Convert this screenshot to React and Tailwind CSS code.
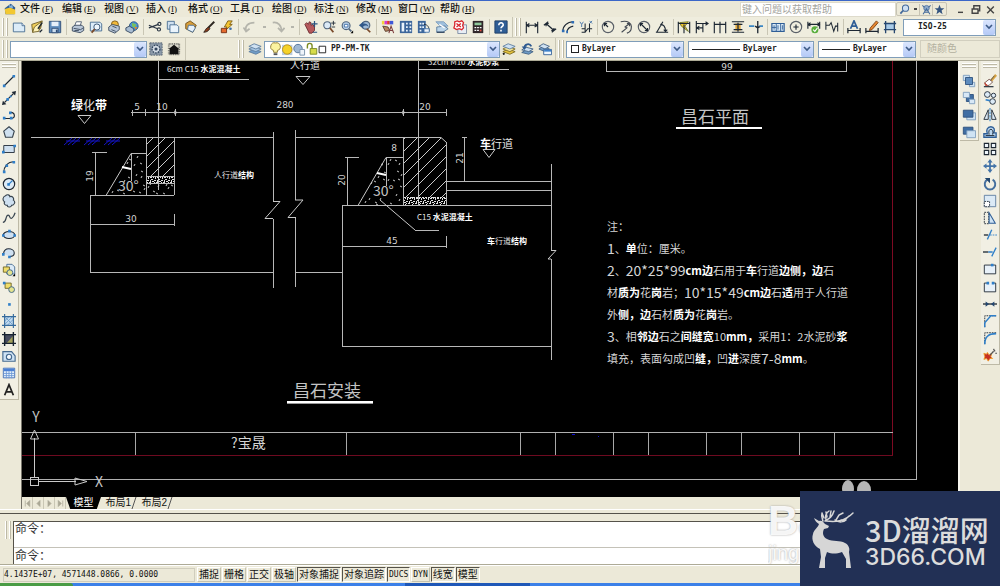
import React from "react";

const INK = "#1d2733";
const BLUE = "#3f6fa8";
const PALE = "#cfe0f0";

const glyphs = {
  new: (
    <g>
      <path d="M1.500 3.500h10l3 3v7h-13z" fill="#dcecf8" stroke="#44698f" />
      <path d="M11.500 3.500v3h3" fill="#fff" stroke="#44698f" />
    </g>
  ),
  open: (
    <g>
      <path d="M2 5l6-2 6-2-2 9-9 4z" fill="#f2d05b" stroke="#6b5a22" />
      <path d="M5 8l8-6-3 11-7 1z" fill="#fdf2b8" stroke="#6b5a22" />
      <path d="M9 10l5-7M11 14l3-3" stroke={INK} strokeWidth="1.500" />
    </g>
  ),
  save: (
    <g>
      <path d="M1.500 1.500h13v13h-13z" fill="#5f8dbd" stroke="#2b4a73" />
      <path d="M4 2h8v5H4z" fill="#e6f0fa" />
      <path d="M4.500 9.500h7v5h-7z" fill="#cddff0" stroke="#2b4a73" />
      <path d="M9 11h2v3H9z" fill="#2b4a73" />
    </g>
  ),
  print: (
    <g>
      <path d="M4 7l2-5h6l-2 6z" fill="#fff" stroke="#4d5c70" />
      <path d="M1.500 8l3-2h8l2 2v4l-4 2.500-9-2z" fill="#b9c7d8" stroke="#39485c" />
      <path d="M3 9.500l8 1.500 3-2M4 12h5" stroke="#39485c" fill="none" />
    </g>
  ),
  preview: (
    <g>
      <path d="M1.500 2.500h11l2 2v8h-13z" fill="#dcecf8" stroke="#44698f" />
      <circle cx="9" cy="8" r="3.500" fill="#eef6fc" stroke="#2d4a6c" />
      <path d="M6.500 10.500L3 14.500" stroke="#7a4a2a" strokeWidth="2" />
    </g>
  ),
  publish: (
    <g>
      <circle cx="9" cy="5" r="4" fill="#f1b93a" stroke="#7a5613" />
      <path d="M2 8l4-3 8 2v4l-5 4-7-3z" fill="#b9c7d8" stroke="#39485c" />
      <path d="M6 7l5 2M5 11l5 2" stroke="#39485c" />
    </g>
  ),
  globe: (
    <g>
      <circle cx="10" cy="7" r="5" fill="#4a93d6" stroke="#2b5480" />
      <path d="M8 3l5 2-2 4-3-2z" fill="#79c05c" />
      <path d="M11 8l3 0-2 3z" fill="#e9842c" />
      <path d="M1 9l4-2 5 3v3l-3 2-6-3z" fill="#a9bdd2" stroke="#33465e" />
    </g>
  ),
  cut: (
    <g fill="none" stroke="#2c3745" strokeWidth="1.300">
      <path d="M1 6l10 4M1 9l11-4" />
      <circle cx="13" cy="4.500" r="1.800" />
      <circle cx="12.500" cy="10.800" r="1.800" />
    </g>
  ),
  copy: (
    <g stroke="#44698f">
      <path d="M1.500 1.500h8v9h-8z" fill="#cfe0f0" />
      <path d="M4.500 5.500h8l2 2v7h-10z" fill="#eaf4fc" />
    </g>
  ),
  paste: (
    <g>
      <path d="M2 4l5-3 7 5-4 8-8-4z" fill="#d99f3a" stroke="#6b4a14" />
      <path d="M5 6h6l2 3-3 5-6-3z" fill="#e6f1fb" stroke="#44698f" />
    </g>
  ),
  brush: (
    <g>
      <path d="M14 2L7 9" stroke="#2c2620" strokeWidth="2.200" />
      <path d="M8 8l1 2c-2 3-4 4-7 4 2-2 2-5 6-6z" fill="#8a3d1d" stroke="#2c2620" />
    </g>
  ),
  editor: (
    <g>
      <path d="M9 1l-4 7h3l-2 4 8-7h-3l3-4z" fill="#f4c430" stroke="#7a5a10" />
      <path d="M1.500 9.500h6v5h-6z" fill="#e56a2e" stroke="#702a10" />
      <circle cx="12" cy="10" r="1.500" fill={BLUE} />
    </g>
  ),
  undo: <path d="M4 14C1 7 6 3 13 3M0.500 8.500L3.500 13l4-3" fill="none" stroke="#b5b5ac" strokeWidth="2" />,
  redo: <path d="M2 3c6-1 10 3 10 10M8 9l4 4 3.500-4" fill="none" stroke="#b5b5ac" strokeWidth="2" />,
  pan: (
    <g>
      <path d="M1 5l2-2 2 2 1-3 2 1v3l2-1 2 3v4l-3 3H6z" fill="#b5595c" stroke="#6a2c30" />
      <path d="M12 1v7M8.500 4.500h7M10 14h5" stroke="#2b5480" strokeWidth="1.400" />
    </g>
  ),
  zoomRt: (
    <g>
      <circle cx="6" cy="6" r="4" fill="#dbe9f6" stroke="#50657e" strokeWidth="1.300" />
      <path d="M9 9l4 5" stroke="#7a4a2a" strokeWidth="2" />
      <path d="M13 1v5M10.500 3.500h5M11 8h4" stroke={INK} />
    </g>
  ),
  zoomWin: (
    <g>
      <circle cx="7" cy="6.500" r="4.500" fill="#b9d0e8" stroke="#50657e" strokeWidth="1.300" />
      <path d="M5 5h4v3H5z" fill="#fff" stroke={BLUE} />
      <path d="M10 10l3 3" stroke="#50657e" strokeWidth="2" />
      <path d="M15 12v3h-3z" fill="#000" />
    </g>
  ),
  zoomPrev: (
    <g>
      <circle cx="9" cy="6" r="4.500" fill="#9fbbd8" stroke="#50657e" strokeWidth="1.300" />
      <path d="M1 6l5-4v2c4 0 5 1 6 4-2-2-4-2-6-1v3z" fill="#31598a" />
      <path d="M10 10l4 4" stroke="#7a4a2a" strokeWidth="2" />
    </g>
  ),
  props: (
    <g>
      <path d="M1 1h3v4H1z" fill="#f3d43a" />
      <path d="M4 1h3v4H4z" fill="#d33ad0" />
      <path d="M7 1h3v4H7z" fill="#e0332e" />
      <path d="M10 1h4v4h-4z" fill="#3e57d8" />
      <path d="M2 7l6 1 2 4-5 1z" fill="#b98660" stroke="#54382a" />
      <path d="M9 15l2.500-8 3 8M10 12h4" fill="none" stroke="#7b3b3b" strokeWidth="1.200" />
    </g>
  ),
  dcenter: (
    <g>
      <path d="M1 1h14v14H1z" fill="#3c669b" />
      <path d="M3 3h3v10H3zM8 3h2v2H8zM12 3h2v2h-2zM8 7h2v2H8zM12 7h2v2h-2zM8 11h2v2H8zM12 11h2v2h-2z" fill="#e9f3fc" />
    </g>
  ),
  palettes: (
    <g>
      <path d="M1 1h9v14H1z" fill="#3c669b" />
      <path d="M3 3h2v2H3zM6 3h2v2H6zM3 7h2v2H3zM6 7h2v2H6zM3 11h2v2H3z" fill="#e9f3fc" />
      <path d="M8 5c4 0 6 3 6 8" fill="none" stroke={INK} />
      <path d="M8 10h6v4H8z" fill="#f0f5fa" stroke={BLUE} />
    </g>
  ),
  sheetset: (
    <g>
      <path d="M1 2h9l5 5H6z" fill="#9fc0dd" stroke="#7c9dbb" />
      <path d="M2 8l9-1 4 3-6 4-7 0z" fill="#bcd6ea" stroke="#56799c" />
      <path d="M2 14h9" stroke="#33465e" strokeWidth="1.500" />
      <path d="M5 5l6 4" stroke="#fff" strokeWidth="1.400" />
    </g>
  ),
  markup: (
    <g>
      <path d="M5.500 5.500h10v10h-10z" fill="#e8eef5" stroke="#7788a0" />
      <path d="M2 2l3-1 2 1 3-1 2 2-1 3 1 3-2 2-3-1-3 1-3-2 1-3z" fill="#fff" stroke="#d8262c" strokeWidth="1.500" />
      <path d="M4 4l5 4M9 4L4 8" stroke="#d8262c" strokeWidth="1.500" />
    </g>
  ),
  calc: (
    <g>
      <path d="M2 1h12v14H2z" fill="#31282b" />
      <path d="M4 3h8v3H4z" fill="#8fc79b" />
      <path d="M4 8h2v1.500H4zM7 8h2v1.500H7zM10 8h2v1.500h-2zM4 11h2v1.500H4zM7 11h2v1.500H7z" fill="#fff" />
      <path d="M10 11h2v2h-2z" fill="#df4b3c" />
    </g>
  ),
  help: (
    <g>
      <path d="M1 1h14v14H1z" fill="#2f5e96" stroke="#1b3b63" />
      <path d="M5.500 6c0-4 5.500-3.500 5 0-.3 1.500-2.500 1.500-2.500 3.500M8 11v2" fill="none" stroke="#fff" strokeWidth="1.800" />
    </g>
  ),
  dimLinear: <path d="M1.500 2v13M14.500 2v13M2 6h12M5 4L2 6l3 2M11 4l3 2-3 2" fill="none" stroke={INK} strokeWidth="1.300" />,
  dimAligned: <path d="M1 6l5-4M10 14l5-4M3.500 4l9 8M3.500 4v3M3.500 4h3M12.500 12v-3M12.500 12h-3" fill="none" stroke={INK} strokeWidth="1.400" />,
  dimArc: (
    <g>
      <path d="M2 13C2 7 7 2 14 2M7 14c0-4 2-6 7-7" fill="none" stroke={INK} strokeWidth="1.300" />
      <path d="M1 11h3v3H1zM12 1h3v3h-3zM6 12h2v3H6z" fill="#2f6db5" />
    </g>
  ),
  dimOrd: (
    <g>
      <path d="M3 14h4l3-4h5M7 4v10M12 4v10M3 10h4" fill="none" stroke={INK} strokeWidth="1.200" />
      <path d="M1 2l2 3 2-3M3 5v3M12 1l3 3M15 1l-3 3" fill="none" stroke={BLUE} />
    </g>
  ),
  dimRadius: (
    <g fill="none" stroke="#5a6068" strokeWidth="1.300">
      <circle cx="8" cy="8" r="6.500" />
      <path d="M8 8L4 4M4 7V4h3" stroke={INK} />
    </g>
  ),
  dimJog: <path d="M2 2c8-2 13 2 12 7 0 3-2 5-5 6M3 14l6-5-2-1 5-4M9 4h3v3" fill="none" stroke="#454b54" strokeWidth="1.300" />,
  dimDia: (
    <g fill="none" stroke="#5a6068" strokeWidth="1.300">
      <circle cx="8" cy="8" r="6.500" />
      <path d="M4 4l8 8M4 7V4h3M12 9v3H9" stroke={INK} />
    </g>
  ),
  dimAng: <path d="M1 14h14M2 14L9 2M6 5c4 0 6 3 6 8M10 11l2 2 2-2" fill="none" stroke={INK} strokeWidth="1.300" />,
  dimQuick: (
    <g>
      <path d="M3 3l10-1-4 5 4 6-8-6z" fill="#f2c62f" stroke="#66712a" />
      <path d="M1.500 2v13M8 5v10M14.500 2v13M2 4h12" fill="none" stroke={INK} strokeWidth="1.300" />
    </g>
  ),
  dimBase: <path d="M1.500 1v14M15 4H2M9 4v5H2M9 9v5M5 7L2 9l3 2M12 2l3 2-3 2" fill="none" stroke={INK} strokeWidth="1.300" />,
  dimCont: <path d="M1.500 2v13M8 2v13M14.500 2v13M2 5h12" fill="none" stroke={INK} strokeWidth="1.300" />,
  dimSpace: (
    <g>
      <path d="M5 4h6v8H5z" fill="#e1a83c" />
      <path d="M1 2h14M1 14h14M8 3v10M3 5h10M3 11h10" fill="none" stroke={INK} strokeWidth="1.400" />
    </g>
  ),
  dimBreak: (
    <g>
      <path d="M10 1v14M7 7l3 2 3-2" fill="none" stroke={INK} strokeWidth="1.500" />
      <path d="M0 7h6M12 7h4" stroke="#3b86c4" strokeWidth="2" />
    </g>
  ),
  tolerance: (
    <g>
      <path d="M1 4h14v9H1z" fill="#dcecf8" stroke="#2f5e96" strokeWidth="1.400" />
      <path d="M6 4v9M11 4v9M3.500 6v5M1 8.500h5M13 6v5M8 6v5" stroke="#2f5e96" />
    </g>
  ),
  center: (
    <g fill="none" stroke="#5a6068" strokeWidth="1.300">
      <circle cx="8" cy="8" r="6.500" />
      <path d="M8 5v6M5 8h6" stroke={INK} />
    </g>
  ),
  inspect: (
    <g>
      <path d="M1 2v8M14.500 2v8M1 5h14M4 3L1.500 5 4 7M12 3l2.500 2L12 7" fill="none" stroke={INK} strokeWidth="1.300" />
      <circle cx="9" cy="11" r="4" fill="#58ae3c" />
      <path d="M7 11l2 2 3-4" fill="none" stroke="#fff" strokeWidth="1.200" />
    </g>
  ),
  jogLine: <path d="M1 2v9M1 6h4l2-3 3 10 2-6h3M14.500 3v10" fill="none" stroke={INK} strokeWidth="1.200" />,
  dimEdit: (
    <g>
      <path d="M4 10l4-9 4 9M5.500 7h5" fill="none" stroke="#2f5e96" strokeWidth="2" />
      <path d="M1 9v6M15 9v6M1 12h14" stroke={INK} strokeWidth="1.400" />
    </g>
  ),
  dimTedit: (
    <g>
      <path d="M13 1l2 2-7 8-3 1 1-3z" fill="#e4862f" stroke="#7c3f12" />
      <path d="M1 9v6M15 9v6M1 13h14" stroke={INK} strokeWidth="1.400" />
    </g>
  ),
  dimUpdate: (
    <g>
      <path d="M3 4h10v7H3z" fill="#a9cbe8" />
      <path d="M3 1v14M13 1v14M1 4h14M1 11h14" stroke="#27476f" strokeWidth="1.500" />
    </g>
  ),
  gear: (
    <g>
      <path d="M1 1h14v14H1z" fill="#8c9aa9" stroke="#4a5969" strokeDasharray="2 1" />
      <circle cx="8" cy="8" r="4.500" fill="#d5dde6" stroke="#33465e" strokeWidth="1.500" strokeDasharray="2 1" />
      <circle cx="8" cy="8" r="1.800" fill="#33465e" />
    </g>
  ),
  home: (
    <g>
      <path d="M2 2h12v12H2z" fill="#d9d7ca" stroke="#6b6b66" strokeDasharray="1 1" strokeWidth="2" />
      <path d="M8 3l6 5h-1v6H3V8H2z" fill="#111" />
    </g>
  ),
  layers: (
    <g stroke="#5c7d9f">
      <path d="M1 11l6-3 8 3-6 3z" fill="#6f9cc7" />
      <path d="M1 8l6-3 8 3-6 3z" fill="#a9c8e4" />
      <path d="M1 5l6-3 8 3-6 3z" fill="#cfe1f1" />
    </g>
  ),
  layersCur: (
    <g>
      <path d="M1 11l6-3 8 3-6 3z" fill="#e8c53e" stroke="#7a6820" />
      <path d="M1 8l6-3 8 3-6 3z" fill="#f4e7a0" stroke="#7a6820" />
      <path d="M1 5l6-3 8 3-6 3z" fill="#cfe1f1" stroke="#5c7d9f" />
      <path d="M3 13l-2 1" stroke="#111" strokeWidth="2" />
    </g>
  ),
  layersPrev: (
    <g>
      <path d="M2 12l5-3 8 2-5 3z" fill="#6f9cc7" stroke="#3f5f82" />
      <path d="M2 9l5-3 8 2-5 3z" fill="#cfe1f1" stroke="#3f5f82" />
      <path d="M5 7c0-5 6-6 8-2" fill="none" stroke="#2d5990" strokeWidth="2" />
      <path d="M2 5l3 4 3-4z" fill="#2d5990" />
    </g>
  ),
  layersState: (
    <g>
      <path d="M1 8l5-3 7 3-5 3z" fill="#6f9cc7" stroke="#3f5f82" />
      <path d="M1 5l5-3 7 3-5 3z" fill="#cfe1f1" stroke="#3f5f82" />
      <path d="M6.500 8.500h9v6h-9z" fill="#eef6fd" stroke="#2f5e96" />
      <path d="M7 9h8v2H7z" fill="#3c7fc9" />
    </g>
  ),
  line: (
    <g>
      <path d="M2 14L14 2" stroke={INK} strokeWidth="1.300" />
      <path d="M1 12h3v3H1zM12 1h3v3h-3z" fill="#2f7fc9" />
    </g>
  ),
  xline: (
    <g>
      <path d="M3 13L13 3" stroke={INK} strokeWidth="1.500" />
      <path d="M0 16l1-5 4 4zM16 0l-1 5-4-4z" fill={INK} />
      <path d="M5 8h3v3H5zM9 5h2v2H9z" fill="#2f7fc9" />
    </g>
  ),
  pline: (
    <g>
      <path d="M2 12h8c6 0 5-7 0-7" stroke={INK} strokeWidth="1.300" fill="none" />
      <path d="M1 10h3v3H1zM8 4h3v3H8zM9 10h3v3H9z" fill="#2f7fc9" />
    </g>
  ),
  polygon: <path d="M8 2l6 5-2 7H4L2 7z" fill={PALE} stroke="#38444f" strokeWidth="1.300" />,
  rect: (
    <g>
      <path d="M2 4h12v8H2z" fill={PALE} stroke={INK} />
      <path d="M0 10h3v3H0zM13 3h3v3h-3z" fill="#2f7fc9" />
    </g>
  ),
  arc: (
    <g>
      <path d="M2 14C2 8 6 2 14 2" stroke={INK} strokeWidth="1.300" fill="none" />
      <path d="M1 12h3v3H1zM4 5h3v3H4zM12 1h3v3h-3z" fill="#2f7fc9" />
    </g>
  ),
  circle: (
    <g>
      <circle cx="8" cy="8" r="6.500" fill="#dceaf6" stroke={INK} strokeWidth="1.300" />
      <path d="M8 8l4-4" stroke="#2f7fc9" strokeWidth="1.300" />
      <path d="M6 7h3v3H6z" fill="#2f7fc9" />
    </g>
  ),
  cloud: <path d="M4 2c2-2 5-1 5 1 3-1 5 2 4 4 3 2 1 6-2 6-1 3-5 2-5 0-3 0-4-2-3-4-3-2-2-6 1-7z" fill={PALE} stroke="#38444f" strokeWidth="1.300" />,
  spline: <path d="M1 13c3 0 3-3 4-6s3-3 4 0 4 1 6-5" fill="none" stroke="#38444f" strokeWidth="1.400" />,
  ellipse: (
    <g>
      <ellipse cx="8" cy="8" rx="6.500" ry="4" fill={PALE} stroke={INK} strokeWidth="1.200" />
      <path d="M0 7h3v3H0zM13 7h3v3h-3zM7 2h3v3H7z" fill="#2f7fc9" />
    </g>
  ),
  earc: (
    <g>
      <path d="M2 9c-1-8 12-7 12-1 0 3-3 4-5 4" fill={PALE} stroke={INK} strokeWidth="1.200" />
      <path d="M0 8h3v3H0zM7 11h3v3H7z" fill="#2f7fc9" />
    </g>
  ),
  insert: (
    <g>
      <path d="M5.500 1.500h6l3 3v8h-9z" fill="#dceaf6" stroke="#44698f" />
      <path d="M1.500 4.500h7v6h-7z" fill="#f0dd6a" stroke="#6d6526" />
      <circle cx="9" cy="11" r="3.300" fill="#e4e48e" stroke="#375f8a" />
      <path d="M15 12v3h-3z" fill="#000" />
    </g>
  ),
  block: (
    <g>
      <path d="M3.500 3.500h7v6h-7z" fill="#f0dd6a" stroke="#6d6526" />
      <circle cx="11" cy="11" r="3.300" fill="#e4e48e" stroke="#375f8a" />
      <path d="M1 2h3v3H1z" fill="#2f7fc9" />
    </g>
  ),
  point: <path d="M7 7h3v3H7z" fill="#2f7fc9" />,
  hatch: (
    <g>
      <path d="M3 3h10v10H3z" fill="#c3dcf0" />
      <path d="M3 8l5-5M3 12l9-9M6 13l7-7M4 4l8 8" stroke="#6d9cc8" />
      <path d="M3 0v16M13 0v16M0 3h16M0 13h16" stroke="#356a9c" strokeWidth="1.300" />
    </g>
  ),
  gradient: (
    <g>
      <path d="M3 3h10v10H3z" fill="#474c60" />
      <path d="M5 13l8-9v9z" fill="#a3a15c" />
      <path d="M3 0v16M13 0v16M0 3h16M0 13h16" stroke="#17222f" strokeWidth="1.600" />
    </g>
  ),
  region: (
    <g>
      <path d="M1 3h10l4 5v6H1z" fill="#cfe3f4" stroke="#44698f" strokeWidth="1.300" />
      <circle cx="8" cy="9" r="3" fill="#f3f8fc" stroke="#44698f" strokeWidth="1.300" />
    </g>
  ),
  table: (
    <g>
      <path d="M1.500 2.500h13v11h-13z" fill="#e8f2fb" stroke="#3868b5" />
      <path d="M2 3h12v3H2z" fill="#4a80d4" />
      <path d="M5 6v8M8 6v8M11 6v8M2 8.500h12M2 11h12" stroke="#6b98d6" />
    </g>
  ),
  mtext: <path d="M3 14L8 2l5 12M5 10h6" fill="none" stroke="#222" strokeWidth="2" />,
  ordFront: (
    <g>
      <path d="M1.500 1.500h7v6h-7zM8.500 9.500h6v5h-6z" fill="#cfe3f4" stroke="#7d9dbd" />
      <path d="M4 4h8v8H4z" fill="#5d8bbd" stroke="#2b4f7c" />
    </g>
  ),
  ordBack: (
    <g>
      <path d="M5 4h8v8H5z" fill="#3f6da3" stroke="#2b4f7c" />
      <path d="M1.500 1.500h7v6h-7zM8.500 9.500h6v5h-6z" fill="#d8e8f6" stroke="#7d9dbd" />
    </g>
  ),
  ordAbove: (
    <g>
      <path d="M5.500 5.500h10v8h-10z" fill="#cfe3f4" stroke="#7d9dbd" />
      <path d="M1.500 2.500h11v8h-11z" fill="#3f6da3" stroke="#2b4f7c" />
    </g>
  ),
  ordUnder: (
    <g>
      <path d="M1.500 2.500h11v8h-11z" fill="#3f6da3" stroke="#2b4f7c" />
      <path d="M5.500 6.500h10v8h-10z" fill="#cfe3f4" stroke="#7d9dbd" />
    </g>
  ),
  erase: (
    <g>
      <path d="M15 1L9 8" stroke="#d9a441" strokeWidth="3" />
      <path d="M13 2l-5 6" stroke="#555" />
      <path d="M2 10l5-4 4 3-4 4H3z" fill="#fff" stroke="#6d4b45" />
      <path d="M2 10l3 3h-2z" fill="#e76a58" stroke="#c2493a" />
      <path d="M1 14.500h11" stroke={INK} strokeWidth="1.300" />
    </g>
  ),
  copyObj: (
    <g fill="#dceaf6" stroke={INK}>
      <circle cx="5" cy="4" r="3.300" />
      <circle cx="12" cy="5" r="2.500" />
      <circle cx="11" cy="12" r="3.200" />
      <path d="M3 10l5 1" stroke="#2f7fc9" strokeWidth="2" />
    </g>
  ),
  mirror: (
    <g>
      <path d="M6 2v11H1zM10 2v11h5z" fill="#dceaf6" stroke={INK} />
      <path d="M8 0v16" stroke="#2f7fc9" strokeDasharray="3 1" strokeWidth="1.200" />
    </g>
  ),
  offset: (
    <g>
      <path d="M1 14v-4h4c-2-4 0-8 4-8s5 4 3 7h3v5z" fill="#b9d5ee" stroke="#2f5e96" strokeWidth="1.500" />
      <path d="M3 12h10M7 11c-1-4 0-6 2-6s3 2 2 6" fill="none" stroke={INK} />
    </g>
  ),
  array: <path d="M1.500 1.500h5v5h-5zM9.500 1.500h5v5h-5zM1.500 9.500h5v5h-5zM9.500 9.500h5v5h-5z" fill="#eef5fb" stroke={INK} strokeWidth="1.300" />,
  move: <path d="M8 0l3 4H9v3h3V5l4 3-4 3V9H9v3h2l-3 4-3-4h2V9H4v2L0 8l4-3v2h3V4H5z" fill="#4373a8" />,
  rotate: (
    <g>
      <path d="M5 3a6 6 0 1 0 6 0" fill="none" stroke="#456f9e" strokeWidth="2.200" />
      <path d="M2 1h6v6z" fill="#24476f" />
    </g>
  ),
  scale: (
    <g>
      <path d="M1.500 1.500h13v13h-13z" fill="#dceaf6" stroke="#5a7c9f" />
      <path d="M1.500 8.500h6v6h-6z" fill="#fff" stroke={INK} strokeDasharray="2 1" />
    </g>
  ),
  stretch: (
    <g>
      <path d="M1.500 1.500h5v13h-5z" fill="none" stroke={INK} strokeDasharray="2 1" />
      <path d="M7 2l7 12H7z" fill="#cfe3f4" stroke="#2f5e96" strokeWidth="1.200" />
    </g>
  ),
  trim: (
    <g>
      <path d="M1 8h5" stroke={INK} strokeWidth="1.500" />
      <path d="M5 13l5-11" stroke="#2f7fc9" strokeWidth="1.500" />
      <path d="M8 8h8" stroke="#2f7fc9" strokeDasharray="2 1" />
    </g>
  ),
  extend: (
    <g>
      <path d="M0 8h6" stroke={INK} strokeWidth="1.500" />
      <path d="M6 8h5M10 13l5-10" stroke="#2f7fc9" strokeWidth="1.500" />
    </g>
  ),
  breakPt: (
    <g>
      <path d="M1.500 3.500h13v10h-13z" fill="#e8f1f9" stroke={INK} />
      <path d="M9 2h3v3H9z" fill="#2f7fc9" />
    </g>
  ),
  breakTwo: (
    <g>
      <path d="M5 3.500H1.500v10h13v-10H11" fill="#e8f1f9" stroke={INK} />
      <path d="M4 2h3v3H4zM10 2h3v3h-3z" fill="#2f7fc9" />
    </g>
  ),
  join: (
    <g>
      <path d="M0 8h16" stroke={INK} strokeWidth="1.500" />
      <path d="M3 5l4 3-4 3zM13 5L9 8l4 3z" fill="#24476f" />
    </g>
  ),
  chamfer: (
    <g fill="none">
      <path d="M2 15V2h13" stroke={INK} strokeDasharray="2 1" />
      <path d="M2 15v-5l7-8h6" stroke="#2f7fc9" strokeWidth="1.600" />
    </g>
  ),
  fillet: (
    <g fill="none">
      <path d="M2 15V2h13" stroke={INK} strokeDasharray="2 1" />
      <path d="M2 15c0-8 4-12 13-12" stroke="#2f7fc9" strokeWidth="1.800" />
    </g>
  ),
  explode: (
    <g>
      <path d="M1 6l3 1 1-2 2 3 3-2-1 4 2 2-3 0-2 3-2-3-3 1 1-3z" fill="#c62f22" stroke="#f0a02d" />
      <path d="M8 8l4-4M12 1l1 2M14 6h2M11 4l3-1" stroke="#555" strokeWidth="1.300" />
    </g>
  ),
  search: (
    <g>
      <circle cx="9.500" cy="6" r="4.500" fill="#cfe0f2" stroke="#42699b" strokeWidth="1.500" />
      <path d="M6 9.500L2 14" stroke="#42699b" strokeWidth="2.500" />
    </g>
  ),
  comm: (
    <g>
      <circle cx="8" cy="6" r="4" fill="#8eaacb" stroke="#42699b" />
      <path d="M3 15l5-8 5 8M5 12h6M2 2l3 3M14 2l-3 3" fill="none" stroke="#42699b" strokeWidth="1.500" />
    </g>
  ),
  star: <path d="M8 1l2 5h5l-4 3.500L12.500 15 8 11.500 3.500 15 5 9.500 1 6h5z" fill="#33547f" />,
};

function Glyph({ name, className = "size-[14px]" }) {
  return (
    <svg viewBox="0 0 16 16" className={`${className} shrink-0`} fill="none" aria-hidden="true">
      {glyphs[name]}
    </svg>
  );
}

function Tool({ name, label, className = "w-[18px] h-4" }) {
  return (
    <button type="button" title={label} aria-label={label} className={`flex shrink-0 items-center justify-center hover:bg-[#c8d6ea] ${className}`}>
      <Glyph name={name} />
    </button>
  );
}

function Separator({ className = "w-[5px]" }) {
  return (
    <span className={`flex h-4 shrink-0 justify-center ${className}`}>
      <span className="w-px bg-[#c9c6b4]" />
    </span>
  );
}

function Grip() {
  return (
    <span className="mx-[2px] flex h-[18px] w-[6px] shrink-0 justify-between">
      <span className="w-[2px] border-r border-[#bdb9a6] bg-white" />
      <span className="w-[2px] border-r border-[#bdb9a6] bg-white" />
    </span>
  );
}

function TopGrip() {
  return (
    <span className="mx-[2px] mb-1 flex h-[5px] shrink-0 flex-col justify-between">
      <span className="h-[2px] border-b border-[#bdb9a6] bg-white" />
      <span className="h-[2px] border-b border-[#bdb9a6] bg-white" />
    </span>
  );
}

function Combo({ label, value, className = "", padding = "pl-1", children }) {
  return (
    <div className={`relative flex h-[17px] items-center border border-[#7f9db9] bg-white ${className}`}>
      {children}
      <select aria-label={label} defaultValue={value} className={`h-full w-full appearance-none bg-transparent font-['DejaVu_Sans_Mono',monospace] text-[8px] font-bold text-[#222] outline-none ${padding}`}>
        <option>{value}</option>
      </select>
      <span className="pointer-events-none absolute top-0 right-0 bottom-0 flex w-3 items-center justify-center rounded-[2px] bg-gradient-to-b from-[#dbe6fd] to-[#b4c9f6]">
        <svg viewBox="0 0 8 6" className="h-[6px] w-2" aria-hidden="true">
          <path d="M1 1l3 3 3-3" fill="none" stroke="#3d5a86" strokeWidth="1.600" />
        </svg>
      </span>
    </div>
  );
}

const menus = [
  ["文件", "F"],
  ["编辑", "E"],
  ["视图", "V"],
  ["插入", "I"],
  ["格式", "O"],
  ["工具", "T"],
  ["绘图", "D"],
  ["标注", "N"],
  ["修改", "M"],
  ["窗口", "W"],
  ["帮助", "H"],
];

function MenuBar() {
  return (
    <header className="flex h-[17px] shrink-0 items-center border-t border-[#3c67c8] pl-1">
      <svg viewBox="0 0 16 16" className="mr-1 size-3" aria-hidden="true">
        <path d="M1 7L9 1l6 5-1 9H2z" fill="#2f5e96" />
        <path d="M1 8l7-2 7 3v6H2z" fill="#f2c832" />
        <path d="M7 2l2 2 2-2 1 5-5-1z" fill="#86b4dc" />
      </svg>
      <nav className="flex flex-1">
        {menus.map(([text, key]) => (
          <button key={key} type="button" className="flex w-[42px] shrink-0 items-center whitespace-nowrap text-[10px] leading-4 font-medium text-[#111]">
            {text}
            <span className="ml-[2px] font-['Liberation_Serif',serif] text-[9px]">
              (<u>{key}</u>)
            </span>
          </button>
        ))}
      </nav>
      <input aria-label="键入问题以获取帮助" placeholder="键入问题以获取帮助" className="h-[15px] w-[156px] border border-[#dedbcc] bg-white px-px text-[10px] outline-none placeholder:text-[#a5a5a0]" />
      <div className="mr-2 flex h-[14px] items-center divide-x divide-[#c6c3b4] rounded-[2px] border border-[#c6c3b4]">
        <button type="button" aria-label="搜索" className="flex w-[23px] items-center justify-center gap-1">
          <Glyph name="search" className="size-[11px]" />
          <span className="h-[2px] w-[3px] bg-[#444]" />
        </button>
        <button type="button" aria-label="通讯中心" className="flex w-[13px] justify-center">
          <Glyph name="comm" className="size-[11px]" />
        </button>
        <button type="button" aria-label="收藏夹" className="flex w-[13px] justify-center">
          <Glyph name="star" className="size-[11px]" />
        </button>
      </div>
      <div className="flex items-center gap-1 pr-1 text-[#444]">
        {[
          ["最小化", "M3 10h6"],
          ["还原", "M2 6h7v5H2zM4 5V2h7v6H9"],
          ["关闭", "M2 3l8 8M10 3l-8 8"],
        ].map(([label, d]) => (
          <button key={label} type="button" aria-label={label}>
            <svg viewBox="0 0 12 12" className="h-[10px] w-[11px]" aria-hidden="true">
              <path d={d} fill="none" stroke="currentColor" strokeWidth="1.700" />
            </svg>
          </button>
        ))}
      </div>
    </header>
  );
}

const standardTools = [
  [["new", "新建"], ["open", "打开"], ["save", "保存"]],
  [["print", "打印"], ["preview", "打印预览"], ["publish", "发布"], ["globe", "三维发布"]],
  [["cut", "剪切"], ["copy", "复制"], ["paste", "粘贴"], ["brush", "特性匹配"], ["editor", "块编辑器"]],
];

const viewTools = [
  [["pan", "实时平移"], ["zoomRt", "实时缩放"], ["zoomWin", "窗口缩放"], ["zoomPrev", "缩放上一个"]],
  [["props", "特性"], ["dcenter", "设计中心"], ["palettes", "工具选项板"], ["sheetset", "图纸集"], ["markup", "标记集"], ["calc", "快速计算器"]],
  [["help", "帮助"]],
];

const dimTools = [
  [["dimLinear", "线性"], ["dimAligned", "对齐"], ["dimArc", "弧长"], ["dimOrd", "坐标"]],
  [["dimRadius", "半径"], ["dimJog", "折弯"], ["dimDia", "直径"], ["dimAng", "角度"]],
  [["dimQuick", "快速标注"], ["dimBase", "基线"], ["dimCont", "连续"], ["dimSpace", "标注间距"], ["dimBreak", "标注打断"]],
  [["tolerance", "公差"], ["center", "圆心标记"], ["inspect", "检验"], ["jogLine", "折弯线性"]],
  [["dimEdit", "编辑标注"], ["dimTedit", "编辑标注文字"], ["dimUpdate", "标注更新"]],
];

function ToolGroups({ groups, sep }) {
  return groups.map((group, i) => (
    <React.Fragment key={i}>
      {i > 0 && <Separator className={sep} />}
      {group.map(([name, label]) => (
        <Tool key={name} name={name} label={label} />
      ))}
    </React.Fragment>
  ));
}

function History({ name, label }) {
  return (
    <>
      <Tool name={name} label={label} />
      <button type="button" aria-label={`${label}列表`} className="flex w-[10px] justify-center">
        <span className="h-[2px] w-[3px] bg-[#b5b5ac]" />
      </button>
    </>
  );
}

function StandardRow() {
  return (
    <div className="flex h-[21px] shrink-0 items-center border-b border-[#d2cfbf] bg-[#efedde]">
      <Grip />
      <ToolGroups groups={standardTools} />
      <Separator />
      <History name="undo" label="放弃" />
      <History name="redo" label="重做" />
      <Separator />
      <ToolGroups groups={viewTools} />
      <span className="ml-[2px] h-full w-px bg-[#c9c6b4]" />
      <Grip />
      <ToolGroups groups={dimTools} sep="w-1" />
      <Combo label="标注样式" value="ISO-25" className="mx-1 min-w-[92px] flex-1" padding="pl-[14px]" />
    </div>
  );
}

function LayerMarks() {
  return (
    <svg viewBox="0 0 66 16" className="pointer-events-none absolute top-0 left-0 h-[15px] w-[66px]" aria-hidden="true">
      <path d="M9 1a4 4 0 0 1 2 8v2H7V9a4 4 0 0 1 2-8z" fill="#fbf3a0" stroke="#8d7b32" />
      <path d="M7 13h4" stroke="#555" strokeWidth="2" />
      <path d="M16 3h11v11H16z" fill="#b8cbe0" />
      <circle cx="21.500" cy="8" r="5" fill="#f5d229" stroke="#b9901b" />
      <circle cx="33" cy="7" r="4.500" fill="#9fb7d2" stroke="#54749a" />
      <path d="M35 8h5v6h-5z" fill="#eef4fa" stroke="#7c93ad" />
      <path d="M43 7V4a2.500 2.500 0 0 1 5 0v3" fill="none" stroke="#7d8c22" strokeWidth="1.500" />
      <path d="M46 7h7v6h-7z" fill="#d6dc4a" stroke="#7d8c22" />
      <path d="M55.500 4.500h7v7h-7z" fill="#fff" stroke="#222" />
    </svg>
  );
}

function LayerRow() {
  return (
    <div className="flex h-[23px] shrink-0 items-center border-b border-[#aeab97]">
      <Grip />
      <Combo label="工作空间" value=" " className="w-[137px]" />
      <Tool name="gear" label="工作空间设置" />
      <Tool name="home" label="我的工作空间" />
      <span className="ml-[2px] h-full w-px bg-[#c9c6b4]" />
      <span className="w-[50px]" />
      <Grip />
      <Tool name="layers" label="图层特性管理器" />
      <Combo label="图层" value="PP-PM-TK" className="w-[236px]" padding="pl-[66px]">
        <LayerMarks />
      </Combo>
      <Tool name="layersCur" label="置为当前" />
      <Tool name="layersPrev" label="上一个图层" />
      <Tool name="layersState" label="图层状态" />
      <span className="ml-px h-full w-px bg-[#c9c6b4]" />
      <Grip />
      <Combo label="颜色" value="ByLayer" className="w-[118px]" padding="pl-[15px]">
        <span className="pointer-events-none absolute left-1 size-2 border border-[#222]" />
      </Combo>
      <Combo label="线型" value="ByLayer" className="ml-1 w-[126px]" padding="pl-[54px]">
        <span className="pointer-events-none absolute left-[3px] h-px w-12 bg-[#222]" />
      </Combo>
      <Combo label="线宽" value="ByLayer" className="ml-1 w-[98px]" padding="pl-[34px]">
        <span className="pointer-events-none absolute left-[3px] h-px w-7 bg-[#222]" />
      </Combo>
      <select disabled aria-label="打印样式" className="ml-1 h-[18px] min-w-0 flex-1 appearance-none border border-[#d2cfbf] pl-[6px] text-[10px] leading-4 text-[#b3b09f] opacity-100">
        <option>随颜色</option>
      </select>
    </div>
  );
}

const drawTools = [
  ["line", "直线"], ["xline", "构造线"], ["pline", "多段线"], ["polygon", "正多边形"], ["rect", "矩形"],
  ["arc", "圆弧"], ["circle", "圆"], ["cloud", "修订云线"], ["spline", "样条曲线"], ["ellipse", "椭圆"],
  ["earc", "椭圆弧"], ["insert", "插入块"], ["block", "创建块"], ["point", "点"], ["hatch", "图案填充"],
  ["gradient", "渐变色"], ["region", "面域"], ["table", "表格"], ["mtext", "多行文字"],
];

const orderTools = [["ordFront", "前置"], ["ordBack", "后置"], ["ordAbove", "置于对象之上"], ["ordUnder", "置于对象之下"]];

const modifyTools = [
  ["erase", "删除"], ["copyObj", "复制对象"], ["mirror", "镜像"], ["offset", "偏移"], ["array", "阵列"],
  ["move", "移动"], ["rotate", "旋转"], ["scale", "缩放"], ["stretch", "拉伸"], ["trim", "修剪"],
  ["extend", "延伸"], ["breakPt", "打断于点"], ["breakTwo", "打断"], ["join", "合并"], ["chamfer", "倒角"],
  ["fillet", "圆角"], ["explode", "分解"],
];

function SideBar({ tools, height }) {
  return (
    <aside className="w-[19px] shrink-0">
      <div className="border-r border-b border-[#bdb9a6] bg-[#f1efe3] pt-[2px]">
        <TopGrip />
        <div className={`flex flex-col ${height}`}>
          {tools.map(([name, label]) => (
            <Tool key={name} name={name} label={label} className="w-full flex-1" />
          ))}
        </div>
      </div>
    </aside>
  );
}

const speckA = [
  [137, 158], [140, 163], [134, 166], [141, 171], [136, 176], [128, 177], [124, 182], [117, 190], [112, 193], [123, 193],
  [141, 178], [143, 185], [144, 190], [139, 192], [148, 188], [153, 191], [158, 187], [163, 193], [168, 189], [171, 185],
  [150, 185], [156, 193], [166, 186], [133, 191], [127, 164], [129, 159],
];
const speckB = [
  [390, 161], [395, 160], [399, 165], [397, 171], [401, 176], [393, 180], [388, 165], [383, 179], [378, 178], [384, 172],
  [371, 184], [374, 181], [380, 200], [375, 202], [369, 200], [390, 203], [396, 196], [400, 186], [399, 201], [376, 204],
  [365, 203], [381, 164], [388, 181], [398, 179],
];

function Specks({ points }) {
  return points.map(([x, y], i) => <path key={i} d={i % 2 ? `M${x} ${y}l2 1` : `M${x} ${y}l1 -2`} />);
}

const columns = [135, 346, 520, 555, 613, 648, 706, 741, 799, 834];

function Cjk({ x, y, size, children, fill = "#e4e4e4" }) {
  return (
    <text x={x} y={y} fontSize={size} fill={fill}>
      {children}
    </text>
  );
}

function B({ children }) {
  return <tspan className="font-bold" fill="#fff">{children}</tspan>;
}

function Drawing() {
  return (
    <svg className="block h-full w-full font-['Noto_Sans_CJK_SC',sans-serif]" role="img" aria-label="昌石安装图">
      <defs>
        <pattern id="diag" width="12" height="12" patternUnits="userSpaceOnUse" patternTransform="translate(3 0)">
          <path d="M-1 13L13 -1M-7 7L7 -7M5 19L19 5" stroke="#c9c9c9" strokeWidth="1" />
        </pattern>
        <pattern id="gravel" width="7" height="7" patternUnits="userSpaceOnUse" shapeRendering="crispEdges">
          <path d="M0 0h1v1H0zM2 0h2v1H2zM6 1h1v2H6zM1 2h1v2H1zM3 2h2v1H3zM4 4h2v1H4zM0 5h2v1H0zM3 5h1v2H3zM5 6h2v1H5z" fill="#e2e2e2" />
        </pattern>
      </defs>
      <g transform="translate(-22 -61)">
        <g fill="none" stroke="#b8b8b8" shapeRendering="crispEdges">
          <path d="M158.500 61V190M158 79.500H249M131 112.500H447M132.500 110V116M145.500 109V116M175.500 109V116M403.500 109V116M446.500 109V116" />
          <path d="M31 137.500H273M295 137.500H441M146.500 137V195M174.500 137V195M131 153.500H146M131.500 153V181" />
          <path d="M90 195.500H174M90.500 195V272M90 272.500H273M295 272.500H342M90 224.500H174M174.500 214V226" />
          <path d="M95.500 153V195M92 152.500H107M92 195.500H98" />
          <path d="M273.500 132V201M273.500 219V288M295.500 130V200M295.500 217V287" />
          <path d="M418.500 61V205M418 69.500H509M403.500 137V205M446.500 142V205M386 157.500H403M386.500 157V186" />
          <path d="M347.500 157V205M345 157.500H359M342 205.500H551M342.500 205V346M342 346.500H551" />
          <path d="M342 246.500H446M446.500 236V248M464.500 137V181M462 137.500H467M446 181.500H551M446 190.500H551" />
          <path d="M551.500 164V250M551.500 259V360M415 230.500H439" />
          <path d="M606.500 61V71M606 71.500H847M846.500 61V72" />
        </g>
        <g fill="none" stroke="#c9c9c9">
          <path d="M78 115.500h13l-6.500 8zM296 76.500h14l-7 8zM483 149.500h12l-6 8z" />
          <path d="M106 195.500L131 153.500M358 205.500L386 157.500M441 137.500l5.500 5M380 200l35 30" />
          <path d="M273 201.500h7l-15 17h8M295 200h8l-15 17.500h8M551 250.500h5l-8 8.500h3" />
          <path d="M122 167l9 2M377 173l9 2" stroke="#fff" strokeWidth="2" />
          <path d="M174 111l3 1.500-3 1.500M402 111l3 1.500-3 1.500" />
          <Specks points={speckA} />
          <Specks points={speckB} />
        </g>
        <path d="M147 138h27v39h-27z" fill="url(#diag)" />
        <path d="M404 138h37l5 5v54h-42z" fill="url(#diag)" />
        <path d="M147 177h27v6h-27z" fill="url(#gravel)" />
        <path d="M146 176.500h28M146 183.500h28" stroke="#b8b8b8" shapeRendering="crispEdges" />
        <path d="M404 197h42v8h-42z" fill="url(#gravel)" />
        <path d="M404 197.500h42" stroke="#ddd" strokeDasharray="2 1" />
        <path
          d="M64 145l8-7M68 145l8-7M72 145l8-7M66 141h14M84 145l8-7M88 145l8-7M92 145l8-7M86 141h14M104 145l8-7M108 145l8-7M112 145l8-7M106 141h14"
          stroke="#1414c8"
          fill="none"
        />

        <g shapeRendering="crispEdges" fill="none">
          <path d="M892.500 61V456" stroke="#7d0a22" />
          <path d="M22 455.500H893" stroke="#6e0a20" />
          <path d="M22 432.500H893M22 479.500H916M916.500 61V480" stroke="#b0b0b0" />
          {columns.map((x) => (
            <path key={x} d={`M${x}.5 433V455`} stroke="#a8a8a8" />
          ))}
          <path d="M572 434.500h3M598 436.500h1" stroke="#1010d0" />
          <path d="M676 128H762M287 401.500H373" stroke="#fff" strokeWidth="2" />
          <path d="M287 403.500H373" stroke="#999" />
          <path d="M34.500 438V477M30.500 477.500h8v8h-8zM39 481.500H76" stroke="#c9c9c9" />
        </g>
        <path d="M34.500 430l-4 9h8zM87 481.500l-12-3.500v7z" fill="none" stroke="#c9c9c9" />

        <g className="font-['DejaVu_Sans',sans-serif]" fontSize="9" fill="#d4d4d4" textAnchor="middle">
          <text x="137" y="110">5</text>
          <text x="162" y="110">10</text>
          <text x="285" y="108">280</text>
          <text x="425" y="110">20</text>
          <text x="131" y="222">30</text>
          <text x="392" y="244">45</text>
          <text x="394" y="151">8</text>
          <text x="727" y="70">99</text>
          <text transform="translate(93 176) rotate(-90)">19</text>
          <text transform="translate(345 180) rotate(-90)">20</text>
          <text transform="translate(463 158) rotate(-90)">21</text>
        </g>
        <g fontSize="14" fill="#c4c4c4">
          <text x="118" y="191">30°</text>
          <text x="373" y="196">30°</text>
        </g>
        <g fontSize="14" fill="#c4c4c4" textAnchor="middle">
          <text x="36" y="422">Y</text>
          <text x="99" y="487">X</text>
        </g>

        <Cjk x={167} y={72} size={8}>
          6cm C15 <B>水泥混凝土</B>
        </Cjk>
        <Cjk x={428} y={65} size={8}>
          32cm M10 <B>水泥砂浆</B>
        </Cjk>
        <Cjk x={290} y={69} size={10}>人行道</Cjk>
        <Cjk x={71} y={110} size={12}>
          <B>绿</B>化<B>带</B>
        </Cjk>
        <Cjk x={480} y={148} size={11}>
          <B>车</B>行道
        </Cjk>
        <Cjk x={214} y={178} size={8}>
          人行道<B>结构</B>
        </Cjk>
        <Cjk x={487} y={244} size={8}>
          <B>车</B>行道<B>结构</B>
        </Cjk>
        <Cjk x={417} y={220} size={8}>
          C15 <B>水泥混凝土</B>
        </Cjk>
        <Cjk x={681} y={123} size={17} fill="#c4c4c4">昌石平面</Cjk>
        <Cjk x={293} y={397} size={17} fill="#c4c4c4">昌石安装</Cjk>
        <Cjk x={231} y={448} size={14} fill="#d4d4d4">?宝晟</Cjk>
        <g fill="#b5b5b5">
          <ellipse cx="848" cy="489" rx="6" ry="9" />
          <ellipse cx="864" cy="490" rx="7" ry="9" />
        </g>
      </g>
    </svg>
  );
}

function Num({ children }) {
  return <span className="text-[14px]">{children}</span>;
}

function Notes() {
  return (
    <div className="absolute top-[154px] left-[585px] font-['Noto_Sans_CJK_SC',sans-serif] text-[11px] whitespace-nowrap text-[#d6d6d6] [&_b]:text-white [&_p]:flex [&_p]:h-[22px] [&_p]:items-center">
      <p>注：</p>
      <p><Num>1</Num>、<b>单</b>位：厘米。</p>
      <p><Num>2</Num>、<Num>20*25*99</Num><b>cm边</b>石用于<b>车</b>行道<b>边侧，边</b>石</p>
      <p>材<b>质为</b>花<b>岗</b>岩；<Num>10*15*49</Num><b>cm边</b>石<b>适</b>用于人行道</p>
      <p>外<b>侧，边</b>石材<b>质为</b>花<b>岗</b>岩。</p>
      <p><Num>3</Num>、相<b>邻边</b>石之<b>间缝宽</b>10<b>mm，</b>采用1：2水泥砂<b>浆</b></p>
      <p>填充，表面勾成凹<b>缝，</b>凹<b>进</b>深度<Num>7-8</Num><b>mm</b>。</p>
    </div>
  );
}

function LayoutTabs() {
  return (
    <div className="flex h-3 shrink-0 items-center text-[10px] leading-3">
      {[
        ["第一个", "M3 2v8M9 2L5 6l4 4z"],
        ["上一个", "M8 2L4 6l4 4z"],
        ["下一个", "M4 2l4 4-4 4z"],
        ["最后一个", "M9 2v8M3 2l4 4-4 4z"],
      ].map(([label, d]) => (
        <button key={label} type="button" aria-label={label} className="flex h-full w-[11px] items-center justify-center border-r border-[#c9c6b4]">
          <svg viewBox="0 0 12 12" className="size-[9px]" aria-hidden="true">
            <path d={d} fill="#aaa795" stroke="#aaa795" />
          </svg>
        </button>
      ))}
      <button type="button" className="h-full w-[35px] bg-black text-center text-white [clip-path:polygon(0_0,100%_0,88%_100%,12%_100%)]">模型</button>
      {["布局1", "布局2"].map((name) => (
        <button key={name} type="button" className="flex h-full w-9 items-center justify-end text-[#111]">
          {name}
          <svg viewBox="0 0 6 12" className="h-3 w-[6px] shrink-0" aria-hidden="true">
            <path d="M1 12L5 0" stroke="#555" />
          </svg>
        </button>
      ))}
    </div>
  );
}

function CommandLine() {
  return (
    <section className="flex h-[51px] shrink-0 border-b border-[#aeab97] pt-[7px] pl-[3px]">
      <Grip />
      <div className="flex min-w-0 flex-1 flex-col border-t border-l border-[#55524a] bg-white text-[12px] text-[#333]">
        <p className="h-[26px] border-b border-[#c4c2b8] pl-px leading-[14px]">命令：</p>
        <div className="flex h-[15px] items-center pl-px">
          <label htmlFor="command">命令：</label>
          <input id="command" className="min-w-0 flex-1 bg-transparent outline-none" />
        </div>
      </div>
    </section>
  );
}

const modes = [
  ["捕捉", false], ["栅格", false], ["正交", false], ["极轴", false], ["对象捕捉", true],
  ["对象追踪", true], ["DUCS", true], ["DYN", false], ["线宽", true], ["模型", true],
];

function StatusBar() {
  return (
    <footer className="flex h-[18px] shrink-0 items-center gap-px border-t border-white pl-[3px]">
      <output className="mr-px flex h-[14px] w-[192px] items-center border border-[#d0cdbd] font-['DejaVu_Sans_Mono',monospace] text-[8px] text-[#111]">
        4.1437E+07, 4571448.0866, 0.0000
      </output>
      {modes.map(([name, on]) => (
        <button
          key={name}
          type="button"
          aria-pressed={on}
          className={`flex h-[15px] shrink-0 items-center border px-px leading-3 whitespace-nowrap text-[#111] ${
            on ? "border-t-[#55524a] border-r-white border-b-white border-l-[#55524a]" : "border-t-white border-r-[#c4c2b0] border-b-[#c4c2b0] border-l-white"
          } ${/^D/.test(name) ? "font-['DejaVu_Sans_Mono',monospace] text-[8px]" : "text-[10px]"}`}
        >
          {name}
        </button>
      ))}
    </footer>
  );
}

function Brand() {
  return (
    <div className="absolute right-0 bottom-0 flex h-[95px] w-[200px] items-center bg-[#223055] pl-[11px] text-[#dcdcdc]">
      <svg viewBox="0 0 46 60" className="mr-2 h-[60px] w-[46px] shrink-0" aria-hidden="true">
        <path
          d="M3 9l5 3c2-1 4 0 6 3l4 2-1 2-4 1c-2 4-1 8 3 10 6 3 13 1 18 4 4 2 5 6 4 9l2 16h-5l0-9-4-7c-6 2-10 2-15 0l-2 6v10H8l2-11-1-8C3 37 0 31 2 25c1-5 5-6 6-10-2-1-4-3-5-6z"
          fill="#d6d6d6"
        />
        <path
          d="M12 12c-1-3-2-5-1-8M13 9l-2-5M15 11c-1-4 0-7 3-9M16 8l-1-5M14 12c5-3 7-4 9-10M19 8l1-6M15 12c9 1 18 1 27-8M25 11l3-5 4-2M30 11c3 1 5-1 8-4M24 11c4 3 9 2 11 0"
          fill="none"
          stroke="#d6d6d6"
          strokeWidth="1.500"
          strokeLinecap="round"
        />
      </svg>
      <div className="flex flex-col pt-1 whitespace-nowrap">
        <strong className="font-['Noto_Sans_CJK_SC',sans-serif] text-[29px] leading-8 font-medium">3D溜溜网</strong>
        <span className="font-['Inter',sans-serif] text-[23px] leading-6 font-medium">3D66.COM</span>
      </div>
    </div>
  );
}

export default function App() {
  return (
    <div className="relative flex h-screen flex-col overflow-hidden bg-[#ece9d8] font-['Liberation_Sans','Noto_Sans_CJK_SC',sans-serif]">
      <MenuBar />
      <StandardRow />
      <LayerRow />
      <main className="flex min-h-0 flex-1">
        <SideBar tools={drawTools} height="h-[327px]" />
        <div className="ml-[2px] flex min-w-0 flex-1 flex-col border-l border-[#77746a]">
          <div className="relative min-h-0 flex-1 overflow-hidden bg-black">
            <Drawing />
            <Notes />
          </div>
          <LayoutTabs />
        </div>
        <div className="flex gap-[2px] border-l-2 border-[#f8f7f0]">
          <SideBar tools={orderTools} height="h-[68px]" />
          <SideBar tools={modifyTools} height="h-[292px]" />
        </div>
      </main>
      <div className="h-[5px] shrink-0 border-t border-b border-t-white border-b-[#55524a]" />
      <CommandLine />
      <StatusBar />
      <div className="flex h-[3px] shrink-0 bg-[#3c80e8]">
        <span className="w-[73px] rounded-tr bg-[#4a9c45]" />
        <span className="ml-[332px] w-[125px] bg-[#1f58b8]" />
      </div>
      <div className="pointer-events-none absolute right-[200px] bottom-[21px] w-8 overflow-hidden whitespace-nowrap text-white/90 [text-shadow:0_0_2px_#999]">
        <p className="text-[42px] leading-10 font-bold">Ba</p>
        <p className="text-[20px] leading-6">jing</p>
      </div>
      <Brand />
    </div>
  );
}
